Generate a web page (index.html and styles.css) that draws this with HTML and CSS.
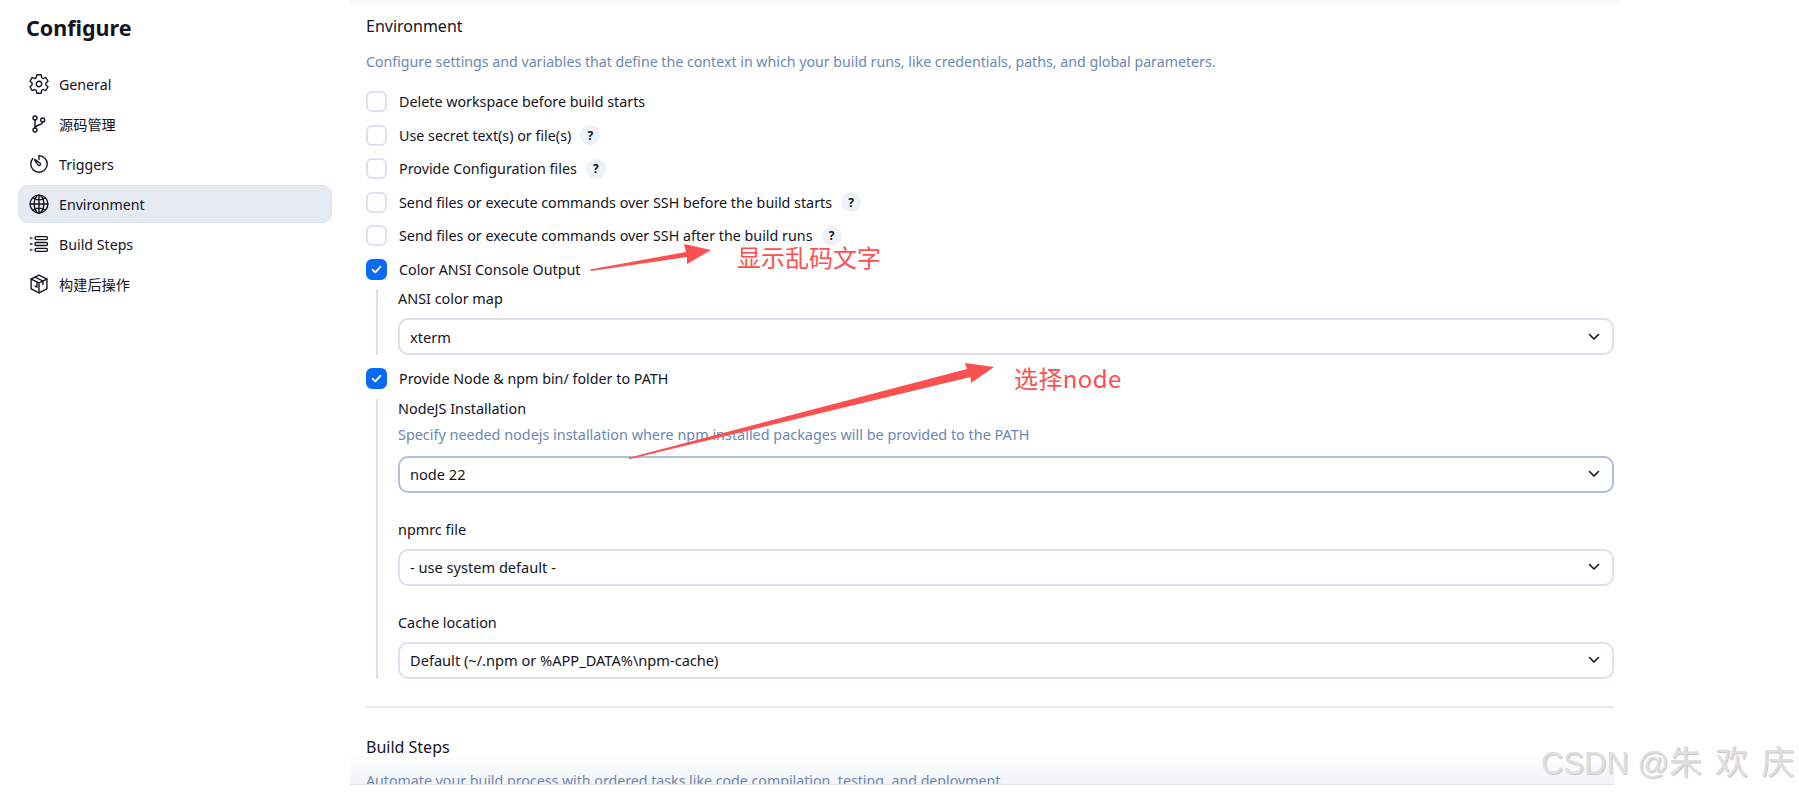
FILE: index.html
```html
<!DOCTYPE html>
<html lang="en">
<head>
<meta charset="utf-8">
<title>Configure</title>
<link rel="stylesheet" href="styles.css">
</head>
<body>
<div class="top-fade"></div>
<div class="bottom-bar"></div>
<div class="page">
  <aside class="sidebar">
    <h1 class="title">Configure</h1>
    <nav class="nav">
      <a class="nav-item">
        <svg class="nav-icon" viewBox="0 0 512 512"><path d="M262.29 192.31a64 64 0 1057.4 57.4 64.13 64.13 0 00-57.4-57.4zM416.39 256a154.34 154.34 0 01-1.53 20.79l45.21 35.46a10.81 10.81 0 012.45 13.75l-42.77 74a10.81 10.81 0 01-13.14 4.59l-44.9-18.08a16.11 16.11 0 00-15.17 1.75A164.48 164.48 0 01325 400.8a15.94 15.94 0 00-8.82 12.14l-6.73 47.89a11.08 11.08 0 01-10.68 9.17h-85.54a11.11 11.11 0 01-10.69-8.87l-6.72-47.82a16.07 16.07 0 00-9-12.22 155.3 155.3 0 01-21.46-12.57 16 16 0 00-15.11-1.71l-44.89 18.07a10.81 10.81 0 01-13.14-4.58l-42.77-74a10.8 10.8 0 012.45-13.75l38.21-30a16.05 16.05 0 006-14.08c-.36-4.17-.58-8.33-.58-12.5s.21-8.27.58-12.35a16 16 0 00-6.07-13.94l-38.19-30A10.81 10.81 0 0149.48 186l42.77-74a10.81 10.81 0 0113.14-4.59l44.9 18.08a16.11 16.11 0 0015.17-1.75A164.48 164.48 0 01187 111.2a15.94 15.94 0 008.82-12.14l6.73-47.89A11.08 11.08 0 01213.23 42h85.54a11.11 11.11 0 0110.69 8.87l6.72 47.82a16.07 16.07 0 009 12.22 155.3 155.3 0 0121.46 12.57 16 16 0 0015.11 1.71l44.89-18.07a10.81 10.81 0 0113.14 4.58l42.77 74a10.8 10.8 0 01-2.45 13.75l-38.21 30a16.05 16.05 0 00-6.05 14.08c.33 4.14.55 8.3.55 12.47z"/></svg>
        <span>General</span>
      </a>
      <a class="nav-item">
        <svg class="nav-icon" viewBox="0 0 512 512"><circle cx="163" cy="116" r="46"/><circle cx="163" cy="396" r="46"/><circle cx="342" cy="163" r="46"/><path d="M163 162v188M342 209c0 80-179 60-179 141"/></svg>
        <span>源码管理</span>
      </a>
      <a class="nav-item">
        <svg class="nav-icon" viewBox="0 0 512 512"><path d="M112.91 128A191.85 191.85 0 0064 254c-1.180 106.350 85.650 193.800 192 194 106.200.2 192-85.830 192-192 0-104.540-83.550-189.610-187.500-192a4.360 4.360 0 00-4.500 4.370V152"/><path d="M233.380 278.630l-79-113a8.130 8.130 0 0111.320-11.320l113 79a32.500 32.500 0 01-37 53.340 33.210 33.210 0 01-7.320-8.020z"/></svg>
        <span>Triggers</span>
      </a>
      <a class="nav-item active">
        <svg class="nav-icon" viewBox="0 0 512 512"><path d="M256 48C141.130 48 48 141.130 48 256s93.130 208 208 208 208-93.130 208-208S370.870 48 256 48z"/><path d="M256 48c-58.070 0-112.670 93.310-112.670 208S197.930 464 256 464s112.670-93.310 112.670-208S314.070 48 256 48z"/><path d="M117.330 117.330c38.240 27.150 86.380 43.340 138.670 43.340s100.430-16.190 138.670-43.340M394.670 394.670c-38.240-27.150-86.380-43.340-138.670-43.340s-100.430 16.190-138.670 43.340M256 48v416M464 256H48"/></svg>
        <span>Environment</span>
      </a>
      <a class="nav-item">
        <svg class="nav-icon" viewBox="0 0 512 512"><rect x="163" y="84" width="290" height="70" rx="30"/><rect x="163" y="221" width="290" height="70" rx="30"/><rect x="163" y="358" width="290" height="70" rx="30"/><path class="dot" d="M60 98l50 21-50 21zM60 235l50 21-50 21zM60 372l50 21-50 21z"/></svg>
        <span>Build Steps</span>
      </a>
      <a class="nav-item">
        <svg class="nav-icon" viewBox="0 0 512 512"><path d="M256 48l184 92v232l-184 92-184-92V140z"/><path d="M72 140l184 92 184-92M256 232v232M164 94l184 92v90M210 210v120l-46-24"/></svg>
        <span>构建后操作</span>
      </a>
    </nav>
  </aside>
  <main class="content">
    <h2 class="section-title">Environment</h2>
    <p class="hint section-hint">Configure settings and variables that define the context in which your build runs, like credentials, paths, and global parameters.</p>
    <div class="check-row"><span class="box"></span><span>Delete workspace before build starts</span></div>
    <div class="check-row"><span class="box"></span><span>Use secret text(s) or file(s)</span><span class="help">?</span></div>
    <div class="check-row"><span class="box"></span><span>Provide Configuration files</span><span class="help">?</span></div>
    <div class="check-row"><span class="box"></span><span>Send files or execute commands over SSH before the build starts</span><span class="help">?</span></div>
    <div class="check-row"><span class="box"></span><span>Send files or execute commands over SSH after the build runs</span><span class="help">?</span></div>
    <div class="check-row"><span class="box on"><svg viewBox="0 0 12 12"><path d="M2.500 6.300l2.400 2.400 4.600-5.200"/></svg></span><span>Color ANSI Console Output</span></div>
    <div class="nested nested-ansi">
      <label class="field-label">ANSI color map</label>
      <div class="select"><span>xterm</span><svg class="chev" viewBox="0 0 12 8"><path d="M1.500 1.500L6 6l4.500-4.500"/></svg></div>
    </div>
    <div class="check-row check-node"><span class="box on"><svg viewBox="0 0 12 12"><path d="M2.500 6.300l2.400 2.400 4.600-5.200"/></svg></span><span>Provide Node &amp; npm bin/ folder to PATH</span></div>
    <div class="nested nested-node">
      <label class="field-label">NodeJS Installation</label>
      <p class="hint field-hint">Specify needed nodejs installation where npm installed packages will be provided to the PATH</p>
      <div class="select focus"><span>node 22</span><svg class="chev" viewBox="0 0 12 8"><path d="M1.500 1.500L6 6l4.500-4.500"/></svg></div>
      <label class="field-label spaced">npmrc file</label>
      <div class="select"><span>- use system default -</span><svg class="chev" viewBox="0 0 12 8"><path d="M1.500 1.500L6 6l4.500-4.500"/></svg></div>
      <label class="field-label spaced">Cache location</label>
      <div class="select"><span>Default (~/.npm or %APP_DATA%\npm-cache)</span><svg class="chev" viewBox="0 0 12 8"><path d="M1.500 1.500L6 6l4.500-4.500"/></svg></div>
    </div>
    <hr class="divider">
    <h2 class="section-title">Build Steps</h2>
    <p class="hint section-hint build-hint">Automate your build process with ordered tasks like code compilation, testing, and deployment.</p>
  </main>
</div>
<svg class="arrows" viewBox="0 0 1799 794">
  <path d="M590 269.500L686 252L684 244L711 250L687 264L687 257L591 271Z"/>
  <path d="M628 458L967 369L965 363L994 367L971 383L970.500 377L630 459Z"/>
</svg>
<span class="note note-a">显示乱码文字</span>
<span class="note note-b">选择node</span>
<span class="mark">CSDN @<span class="mark-cjk">朱 欢 庆</span></span>
</body>
</html>
```

FILE: styles.css
```css
* { box-sizing: border-box; }
html, body { margin: 0; height: 100%; }
body {
  background: #fefefe;
  color: #14141f;
  font-family: "Noto Sans", "Noto Sans CJK SC", sans-serif;
  font-size: 14.3px;
  overflow: hidden;
  position: relative;
}
.page { display: flex; height: 784px; overflow: hidden; position: relative; z-index: 1; }
.sidebar { width: 366px; flex: none; padding: 11px 0 0 18px; }
.title { margin: 0 0 20px 8px; font-size: 21.500px; line-height: 34px; font-weight: 700; }
.nav { width: 314px; display: flex; flex-direction: column; gap: 2px; font-size: 14.200px; }
.nav-item {
  height: 38px;
  display: flex;
  align-items: center;
  gap: 9px;
  padding-left: 9px;
  border-radius: 10px;
  border: 1px solid transparent;
}
.nav-item.active { background: #e6eaf2; border-color: #dfe4ee; }
.nav-icon { width: 22px; height: 22px; fill: none; stroke: #14141f; stroke-width: 32; stroke-linecap: round; stroke-linejoin: round; flex: none; }
.nav-icon .dot { fill: #14141f; stroke-width: 10; }
.content { width: 1248px; flex: none; padding-top: 14px; }
.section-title { margin: 0; font-size: 16px; line-height: 24px; font-weight: 400; color: #14141f; }
.hint { margin: 0; color: #6a88b5; }
.section-hint { margin: 13px 0 12px; line-height: 22px; font-size: 14.200px; }
.build-hint { margin-top: 11px; }
.check-row { display: flex; align-items: center; height: 33.500px; }
.box {
  width: 21px;
  height: 21px;
  flex: none;
  margin-right: 12px;
  border: 2px solid #dde2ee;
  border-radius: 6px;
  background: #fff;
}
.box.on { background: #0b6af5; border-color: #0b6af5; display: flex; align-items: center; justify-content: center; }
.box.on svg { width: 13px; height: 13px; fill: none; stroke: #fff; stroke-width: 1.800; stroke-linecap: round; stroke-linejoin: round; }
.help {
  width: 20px;
  height: 20px;
  margin-left: 9px;
  border-radius: 50%;
  background: #eef1f6;
  font-size: 12px;
  font-weight: 700;
  display: flex;
  align-items: center;
  justify-content: center;
}
.nested { margin-left: 10px; padding-left: 20px; border-left: 2px solid #d9dfeb; }
.nested-ansi { margin-top: 3px; }
.check-node { margin-top: 7px; }
.nested-node { margin-top: 3px; }
.field-label { display: block; line-height: 20px; font-size: 14.400px; }
.field-hint { line-height: 20px; margin: 6px 0 11px; font-size: 14.400px; }
.nested-ansi .field-label { margin-bottom: 9px; }
.spaced { margin-top: 27px; margin-bottom: 9px; }
.select {
  height: 37px;
  display: flex;
  align-items: center;
  justify-content: space-between;
  padding: 0 12px 0 10px;
  background: #fff;
  border: 2px solid #dbe0ec;
  border-radius: 10px;
  font-size: 14.600px;
}
.select.focus { border-color: #b0bfd6; }
.chev { width: 12px; height: 8px; fill: none; stroke: #14141f; stroke-width: 1.600; stroke-linecap: round; stroke-linejoin: round; }
.divider { border: 0; height: 2px; margin: 27px 0 27px; background: #e6eaf3; }
.top-fade { position: absolute; left: 350px; top: 0; width: 1270px; height: 6px; background: linear-gradient(#f6f7f9, #fefefe); }
.bottom-bar {
  position: absolute;
  left: 350px;
  top: 755px;
  width: 1264px;
  height: 30px;
  background: linear-gradient(#fefefe, #f2f4f8 29px, #dfe3ec 29px);
}
.arrows { position: absolute; left: 0; top: 0; width: 1799px; height: 794px; z-index: 2; }
.arrows path { fill: #fc5050; }
.note { position: absolute; z-index: 2; color: #fc5050; font-size: 24px; line-height: 32px; font-family: "Noto Sans CJK SC", "Noto Sans", sans-serif; }
.note-a { left: 737px; top: 241px; }
.note-b { left: 1014px; top: 362px; letter-spacing: .4px; }
.mark {
  position: absolute;
  z-index: 2;
  left: 1541px;
  top: 745px;
  font-family: "Liberation Sans", "Noto Sans CJK SC", sans-serif;
  font-size: 31px;
  line-height: 36px;
  color: #dfdfdf;
  text-shadow: 1px 1px 1px #c6c6c6;
  white-space: pre;
}
.mark-cjk { font-size: 33px; word-spacing: 4px; }
```
